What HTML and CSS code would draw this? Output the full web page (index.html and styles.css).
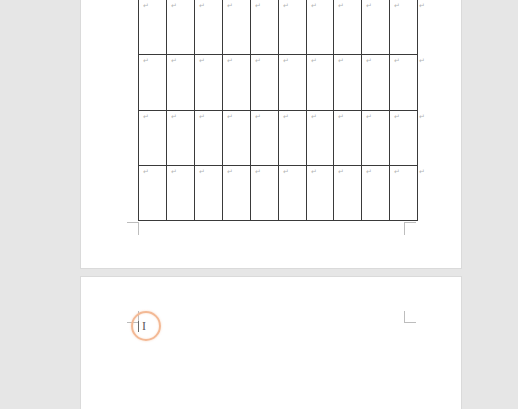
FILE: index.html
```html
<!DOCTYPE html>
<html>
<head>
<meta charset="utf-8">
<link rel="stylesheet" href="styles.css">
</head>
<body>
<div class="doc">
  <div class="page page1">
    <div class="table">
      <div class="row"><span class="cell"><i>↵</i></span><span class="cell"><i>↵</i></span><span class="cell"><i>↵</i></span><span class="cell"><i>↵</i></span><span class="cell"><i>↵</i></span><span class="cell"><i>↵</i></span><span class="cell"><i>↵</i></span><span class="cell"><i>↵</i></span><span class="cell"><i>↵</i></span><span class="cell"><i>↵</i></span><span class="eol">↵</span></div>
      <div class="row tall"><span class="cell"><i>↵</i></span><span class="cell"><i>↵</i></span><span class="cell"><i>↵</i></span><span class="cell"><i>↵</i></span><span class="cell"><i>↵</i></span><span class="cell"><i>↵</i></span><span class="cell"><i>↵</i></span><span class="cell"><i>↵</i></span><span class="cell"><i>↵</i></span><span class="cell"><i>↵</i></span><span class="eol">↵</span></div>
      <div class="row"><span class="cell"><i>↵</i></span><span class="cell"><i>↵</i></span><span class="cell"><i>↵</i></span><span class="cell"><i>↵</i></span><span class="cell"><i>↵</i></span><span class="cell"><i>↵</i></span><span class="cell"><i>↵</i></span><span class="cell"><i>↵</i></span><span class="cell"><i>↵</i></span><span class="cell"><i>↵</i></span><span class="eol">↵</span></div>
      <div class="row"><span class="cell"><i>↵</i></span><span class="cell"><i>↵</i></span><span class="cell"><i>↵</i></span><span class="cell"><i>↵</i></span><span class="cell"><i>↵</i></span><span class="cell"><i>↵</i></span><span class="cell"><i>↵</i></span><span class="cell"><i>↵</i></span><span class="cell"><i>↵</i></span><span class="cell"><i>↵</i></span><span class="eol">↵</span></div>
    </div>
    <span class="mark mark-bl"></span>
    <span class="mark mark-br"></span>
  </div>
  <div class="page page2">
    <span class="mark mark-tl"></span>
    <span class="mark mark-tr"></span>
    <span class="caret"></span>
    <span class="ibeam">I</span>
    <span class="click"></span>
  </div>
</div>
</body>
</html>
```

FILE: styles.css
```css
html, body {
  margin: 0;
  padding: 0;
  background: #e6e6e6;
  height: 409px;
  overflow: hidden;
  font-family: "Liberation Sans", Arial, sans-serif;
}

.doc {
  display: flex;
  flex-direction: column;
  gap: 9px;
  padding-left: 81px;
}

.page {
  position: relative;
  width: 380px;
  background: #ffffff;
  box-shadow: 0 0 0 1px #dadada;
}

.page1 {
  height: 268px;
  overflow: hidden;
  display: flex;
  flex-direction: column;
  justify-content: flex-end;
}

.page2 {
  height: 132px;
}

.table {
  margin-left: 57px;
  margin-bottom: 47px;
  display: flex;
  flex-direction: column;
}

.row {
  display: flex;
  height: 55px;
}

.row.tall {
  height: 56px;
}

.cell {
  box-sizing: border-box;
  width: 28px;
  height: 100%;
  border-right: 1px solid #3a3a3a;
  border-bottom: 1px solid #3a3a3a;
  position: relative;
}

.cell:first-child {
  width: 29px;
  border-left: 1px solid #3a3a3a;
}

.cell:nth-child(7) {
  width: 27px;
}

.cell i,
.eol {
  font-style: normal;
  font-size: 7px;
  line-height: 7px;
  color: #b4b4b4;
  display: block;
}

.cell i {
  padding: 2px 0 0 4px;
}

.eol {
  padding: 2px 0 0 1px;
}

.mark {
  position: absolute;
  border-color: #bdbdbd;
  border-style: solid;
  border-width: 0;
}

.mark-bl {
  left: 46px;
  top: 222px;
  width: 11px;
  height: 12px;
  border-top-width: 1px;
  border-right-width: 1px;
}

.mark-br {
  left: 323px;
  top: 222px;
  width: 11px;
  height: 12px;
  border-top-width: 1px;
  border-left-width: 1px;
}

.mark-tl {
  left: 46px;
  top: 34px;
  width: 11px;
  height: 11px;
  border-bottom-width: 1px;
  border-right-width: 1px;
}

.mark-tr {
  left: 323px;
  top: 34px;
  width: 11px;
  height: 11px;
  border-bottom-width: 1px;
  border-left-width: 1px;
}

.caret {
  position: absolute;
  left: 57px;
  top: 44px;
  width: 1px;
  height: 11px;
  background: #6a6a6a;
}

.ibeam {
  position: absolute;
  left: 61px;
  top: 42px;
  font-family: "Liberation Serif", serif;
  font-size: 12px;
  line-height: 14px;
  color: #5a5a5a;
}

.click {
  position: absolute;
  left: 50px;
  top: 34px;
  width: 26px;
  height: 26px;
  border-radius: 50%;
  border: 2px solid #f3b995;
  box-shadow: 0 0 2px rgba(242, 170, 120, 0.5), inset 0 0 2px rgba(242, 170, 120, 0.4);
}
```
